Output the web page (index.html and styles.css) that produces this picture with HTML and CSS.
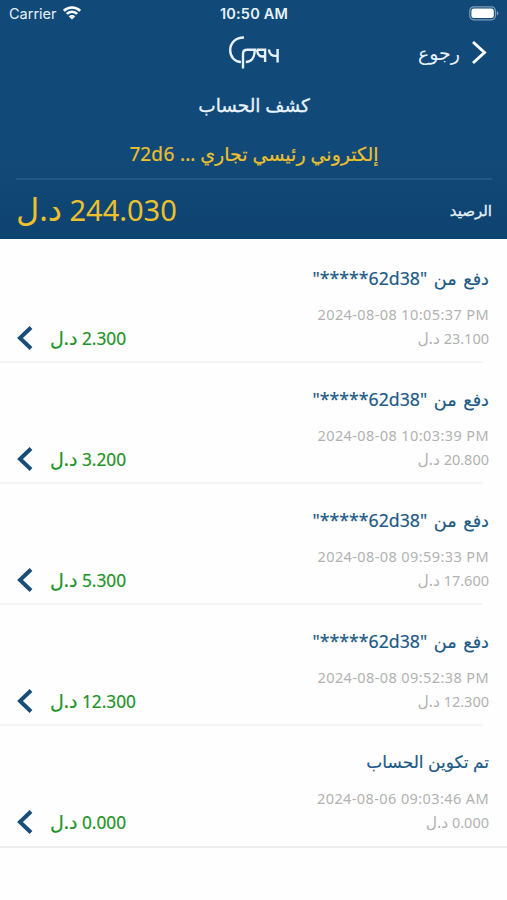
FILE: index.html
```html
<!DOCTYPE html>
<html lang="ar" dir="rtl">
<head>
    <meta charset="UTF-8">
    <meta name="viewport" content="width=device-width, initial-scale=1.0">
    <title>كشف الحساب</title>
    <link rel="stylesheet" href="styles.css">
</head>
<body>
    <header class="header">
        <div class="status-bar" dir="ltr">
            <div class="carrier">
                <span>Carrier</span>
                <svg width="18" height="14" viewBox="0 0 18 14" fill="none" stroke="#fff" stroke-width="2.6">
                    <path d="M.9 4.8a11.5 11.5 0 0 1 16.2 0M3.8 7.9a7.4 7.4 0 0 1 10.4 0"/>
                    <path d="M9 13.6 5.8 10.4a4.6 4.6 0 0 1 6.4 0z" fill="#fff" stroke="none"/>
                </svg>
            </div>
            <span class="time">10:50 AM</span>
            <svg class="battery" width="30" height="15" viewBox="0 0 30 15">
                <rect x=".8" y=".8" width="25.6" height="13" rx="4" fill="none" stroke="#7f9fbb" stroke-width="1.2"/>
                <rect x="2.4" y="2.5" width="22.4" height="9.6" rx="2.4" fill="#fff"/>
                <path d="M27.8 5v4.6q1.6-.8 1.6-2.3T27.8 5z" fill="#7f9fbb"/>
            </svg>
        </div>

        <div class="nav" dir="ltr">
            <svg class="logo" width="52" height="34" viewBox="0 0 52 34" fill="none" stroke="#e8f2fb" stroke-width="2.4">
                <path d="M16 1.500C7.500 1.500 2.200 7 2.200 14.200c0 7 5 11.800 10.700 11.800"/>
                <path d="M15 32.500V18q0-4.200 4.200-4.200h7.600c0 7.600-3.600 12.200-9 12.200"/>
                <path d="M28.500 13.800h8.600V26M37 20c-4.800 1.600-7.500-.8-8-6.200M41 13.500c.2 5 3 7 8.500 6.200M49.600 13v13.500"/>
            </svg>
            <a class="back" href="#">
                <span>رجوع</span>
                <svg width="16" height="26" viewBox="0 0 16 26" fill="none" stroke="#fff" stroke-width="2.9">
                    <path d="M2 2 13.500 12.500 2 23"/>
                </svg>
            </a>
        </div>

        <h1 class="page-title">كشف الحساب</h1>
        <div class="account">إلكتروني رئيسي تجاري <span class="account-id">... 72d6</span></div>

        <div class="balance">
            <span class="balance-label">الرصيد</span>
            <span class="balance-value">244.030 <span class="currency">د.ل</span></span>
        </div>
    </header>

    <main class="list">
        <div class="row">
            <div class="info">
                <div class="name">دفع من <span class="code">"62d38*****"</span></div>
                <div class="date" dir="ltr">2024-08-08 10:05:37 PM</div>
                <div class="after">23.100 <span class="currency">د.ل</span></div>
            </div>
            <div class="amount">
                <span>2.300 <span class="currency">د.ل</span></span>
                <svg class="arrow" width="16" height="24" viewBox="0 0 16 24"><path d="M14 1.500 3 12l11 10.500"/></svg>
            </div>
        </div>
        <div class="row">
            <div class="info">
                <div class="name">دفع من <span class="code">"62d38*****"</span></div>
                <div class="date" dir="ltr">2024-08-08 10:03:39 PM</div>
                <div class="after">20.800 <span class="currency">د.ل</span></div>
            </div>
            <div class="amount">
                <span>3.200 <span class="currency">د.ل</span></span>
                <svg class="arrow" width="16" height="24" viewBox="0 0 16 24"><path d="M14 1.500 3 12l11 10.500"/></svg>
            </div>
        </div>
        <div class="row">
            <div class="info">
                <div class="name">دفع من <span class="code">"62d38*****"</span></div>
                <div class="date" dir="ltr">2024-08-08 09:59:33 PM</div>
                <div class="after">17.600 <span class="currency">د.ل</span></div>
            </div>
            <div class="amount">
                <span>5.300 <span class="currency">د.ل</span></span>
                <svg class="arrow" width="16" height="24" viewBox="0 0 16 24"><path d="M14 1.500 3 12l11 10.500"/></svg>
            </div>
        </div>
        <div class="row">
            <div class="info">
                <div class="name">دفع من <span class="code">"62d38*****"</span></div>
                <div class="date" dir="ltr">2024-08-08 09:52:38 PM</div>
                <div class="after">12.300 <span class="currency">د.ل</span></div>
            </div>
            <div class="amount">
                <span>12.300 <span class="currency">د.ل</span></span>
                <svg class="arrow" width="16" height="24" viewBox="0 0 16 24"><path d="M14 1.500 3 12l11 10.500"/></svg>
            </div>
        </div>
        <div class="row last">
            <div class="info">
                <div class="name created">تم تكوين الحساب</div>
                <div class="date" dir="ltr">2024-08-06 09:03:46 AM</div>
                <div class="after">0.000 <span class="currency">د.ل</span></div>
            </div>
            <div class="amount">
                <span>0.000 <span class="currency">د.ل</span></span>
                <svg class="arrow" width="16" height="24" viewBox="0 0 16 24"><path d="M14 1.500 3 12l11 10.500"/></svg>
            </div>
        </div>
    </main>
</body>
</html>
```
FILE: styles.css
```css
:root {
    --blue: #114a79;
    --name: #1d5a85;
    --yellow: #edc02c;
    --green: #1e9428;
    --gray: #b2b2b2;
}

* {
    box-sizing: border-box;
}

body {
    margin: 0;
    background: #fefefe;
    font-family: "Noto Sans", "DejaVu Sans", sans-serif;
    white-space: nowrap;
}

svg {
    display: block;
    flex: none;
}

.header {
    height: 239px;
    padding: 0 15px 0 16px;
    background: linear-gradient(var(--blue) 60%, #0f4370);
    color: #e8f2fb;
}

.status-bar {
    display: grid;
    grid-template-columns: 1fr auto 1fr;
    align-items: center;
    height: 27px;
    margin: 0 -7px 0 -7px;
    font: 14.5px/27px Inter, sans-serif;
}

.carrier {
    display: flex;
    align-items: center;
    gap: 6px;
}

.carrier svg {
    margin-top: -2px;
}

.time {
    font-weight: 600;
    letter-spacing: 0.2px;
}

.battery {
    justify-self: end;
}

.nav {
    display: grid;
    grid-template-columns: 1fr auto 1fr;
    align-items: center;
    height: 51px;
}

.logo {
    grid-column: 2;
}

.back {
    display: flex;
    justify-content: flex-end;
    align-items: center;
    gap: 11px;
    padding-right: 5px;
    color: #e8f2fb;
    font-size: 19px;
    text-decoration: none;
}

.page-title {
    margin: 10px 0 0;
    font-size: 18.5px;
    font-weight: normal;
    line-height: 34px;
    text-align: center;
    -webkit-text-stroke: 0.3px;
}

.account {
    height: 58px;
    padding-top: 14px;
    border-bottom: 2px solid #235886;
    color: var(--yellow);
    font-size: 19px;
    line-height: 36px;
    text-align: center;
    -webkit-text-stroke: 0.2px;
}

.account-id {
    font-size: 19px;
    letter-spacing: 0.7px;
}

.balance {
    display: flex;
    justify-content: space-between;
    align-items: center;
    height: 59px;
}

.balance-label {
    font-size: 15px;
    -webkit-text-stroke: 0.3px;
}

.balance-value {
    color: var(--yellow);
    font-size: 29px;
    line-height: 38px;
    letter-spacing: 0.6px;
}

.currency {
    font-size: 1.1em;
    line-height: 1;
    letter-spacing: 0;
}

.list {
    padding-top: 3px;
}

.row {
    display: flex;
    justify-content: space-between;
    height: 121px;
    padding: 22px 18px 0 17px;
    background: linear-gradient(#f5f5f5, #f5f5f5) left bottom / calc(100% - 24px) 2px no-repeat;
}

.last {
    height: 122px;
    background: none;
    border-bottom: 2px solid #ececec;
}

.name {
    height: 28px;
    color: var(--name);
    font-size: 17.7px;
    line-height: 28px;
    word-spacing: 2px;
    -webkit-text-stroke: 0.2px;
}

.created {
    font-size: 17px;
    word-spacing: 0;
}

.date {
    margin-top: 10px;
    color: var(--gray);
    font-size: 14.5px;
    line-height: 24px;
    letter-spacing: 0.4px;
    text-align: right;
}

.after {
    color: var(--gray);
    font-size: 14.5px;
    line-height: 24px;
}

.after .currency {
    font-size: 15.5px;
}

.amount {
    display: flex;
    align-items: center;
    gap: 17px;
    height: 26px;
    margin-top: 61px;
    color: var(--green);
    font-size: 17.3px;
    letter-spacing: 0.5px;
    -webkit-text-stroke: 0.2px;
}

.arrow path {
    fill: none;
    stroke: #174d78;
    stroke-width: 4;
}
```
